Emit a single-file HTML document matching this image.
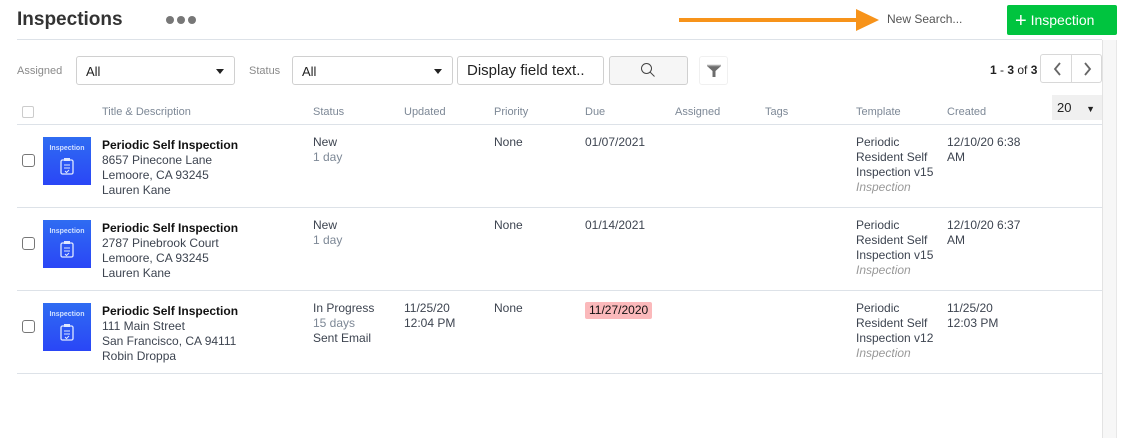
<!DOCTYPE html>
<html><head><meta charset="utf-8"><style>
*{box-sizing:border-box;margin:0;padding:0}
body{width:1137px;height:438px;background:#fff;font-family:"Liberation Sans",Arial,sans-serif;position:relative;overflow:hidden;color:#333}
.a{position:absolute;white-space:nowrap}
.sel{position:absolute;border:1px solid #d0d0d0;border-radius:3px;background:#fff;font-size:13px;color:#222;padding:7px 0 0 9px}
.sel .car{position:absolute;right:10px;top:12px;width:0;height:0;border-left:4px solid transparent;border-right:4px solid transparent;border-top:5px solid #222}
.lbl{font-size:11px;color:#8a8a8a}
.th{font-size:11px;color:#7d8896;top:106px}
.row{position:absolute;left:17px;width:1085px;height:83px;border-bottom:1px solid #dde2e8}
.c{position:absolute;font-size:12px;line-height:15px;color:#3d4450}
.g{color:#7d8896}
.cb{position:absolute;left:5px;width:13px;height:13px;border:1px solid #777;border-radius:3px;background:#fff}
.ic{position:absolute;left:26px;top:12px;width:48px;height:48px;background:linear-gradient(#2f6cf2,#2a46f6);color:#cfe0ff;font-size:7px;font-weight:bold;text-align:center;padding-top:8px}
</style></head><body>
<div class="a" style="left:17px;top:9px;font-size:19px;font-weight:bold;color:#333">Inspections</div>
<div class="a" style="left:166px;top:16px;width:8px;height:8px;border-radius:50%;background:#777"></div>
<div class="a" style="left:177px;top:16px;width:8px;height:8px;border-radius:50%;background:#777"></div>
<div class="a" style="left:188px;top:16px;width:8px;height:8px;border-radius:50%;background:#777"></div>
<div class="a" style="left:679px;top:18px;width:180px;height:4px;background:#f7931a"></div>
<div class="a" style="left:856px;top:9px;width:0;height:0;border-top:11px solid transparent;border-bottom:11px solid transparent;border-left:23px solid #f7931a"></div>
<div class="a" style="left:887px;top:12px;font-size:12px;color:#555">New Search...</div>
<div class="a" style="left:1007px;top:5px;width:110px;height:30px;background:#00c43f;border-radius:2px;color:#fff;font-size:14px;padding:7px 0 0 8px"><span style="font-size:20px;line-height:12px;position:relative;top:2px">+</span> Inspection</div>
<div class="a" style="left:17px;top:39px;width:1085px;height:1px;background:#dde2e8"></div>
<div class="a" style="left:1102px;top:40px;width:15px;height:398px;background:#f7f7f7;border-left:1px solid #e3e3e3;border-right:1px solid #e8e8e8"></div>
<div class="a lbl" style="left:17px;top:65px">Assigned</div>
<div class="sel" style="left:76px;top:56px;width:159px;height:29px">All<div class="car"></div></div>
<div class="a lbl" style="left:249px;top:65px">Status</div>
<div class="sel" style="left:292px;top:56px;width:161px;height:29px">All<div class="car"></div></div>
<div class="sel" style="left:457px;top:56px;width:147px;height:29px;font-size:15px;padding:5px 0 0 9px">Display field text..</div>
<div class="a" style="left:609px;top:56px;width:79px;height:29px;border:1px solid #d0d0d0;border-radius:3px;background:#f6f6f6"></div>
<svg class="a" style="left:640px;top:62px" width="16" height="16" viewBox="0 0 16 16"><circle cx="6.5" cy="6.5" r="5" fill="none" stroke="#444" stroke-width="1"/><line x1="10" y1="10" x2="14.5" y2="14.5" stroke="#444" stroke-width="1"/></svg>
<div class="a" style="left:699px;top:56px;width:29px;height:29px;border:1px solid #f0f0f0;border-radius:3px"></div>
<svg class="a" style="left:706px;top:64px" width="16" height="14" viewBox="0 0 16 14"><path d="M1 2h14l-5.5 5v6h-3V7z" fill="#6d6d6d"/><path d="M1 1.5h14" stroke="#aaa" stroke-width="1.5"/></svg>
<div class="a" style="left:990px;top:63px;font-size:12px;color:#222"><b>1</b> - <b>3</b> of <b>3</b></div>
<div class="a" style="left:1040px;top:54px;width:62px;height:29px;border:1px solid #d8d8d8;border-radius:3px;background:#fff"></div>
<div class="a" style="left:1071px;top:54px;width:1px;height:29px;background:#d8d8d8"></div>
<svg class="a" style="left:1050px;top:59px" width="14" height="20"><path d="M10 4L5 10l5 6" fill="none" stroke="#666" stroke-width="1.8"/></svg>
<svg class="a" style="left:1080px;top:59px" width="14" height="20"><path d="M5 4l5 6-5 6" fill="none" stroke="#666" stroke-width="1.8"/></svg>
<div class="a" style="left:1052px;top:95px;width:50px;height:25px;background:#f0f0f0;font-size:13px;color:#222;padding:5px 0 0 5px">20 <span style="font-size:9px;margin-left:11px">▼</span></div>
<div class="a" style="left:22px;top:106px;width:12px;height:12px;border:1px solid #ccc;border-radius:2px"></div>
<div class="a th" style="left:102px">Title &amp; Description</div>
<div class="a th" style="left:313px">Status</div>
<div class="a th" style="left:404px">Updated</div>
<div class="a th" style="left:494px">Priority</div>
<div class="a th" style="left:585px">Due</div>
<div class="a th" style="left:675px">Assigned</div>
<div class="a th" style="left:765px">Tags</div>
<div class="a th" style="left:856px">Template</div>
<div class="a th" style="left:947px">Created</div>
<div class="a" style="left:17px;top:124px;width:1085px;height:1px;background:#dde2e8"></div>

<div class="row" style="top:125px">
<div class="cb" style="top:29px"></div><div class="ic">Inspection<svg style="display:block;margin:5px auto 0" width="14" height="18" viewBox="0 0 14 18"><rect x="1" y="3" width="12" height="14" rx="1.5" fill="none" stroke="#dfe8ff" stroke-width="1.3"/><rect x="4" y="1" width="6" height="3" fill="#dfe8ff"/><path d="M4 8h6M4 11h6M5 14l1.5 1.5L9 13" stroke="#dfe8ff" stroke-width="1" fill="none"/></svg></div>
<div class="c" style="left:85px;top:13px"><b style="color:#111">Periodic Self Inspection</b><br>8657 Pinecone Lane<br>Lemoore, CA 93245<br>Lauren Kane</div>
<div class="c" style="left:296px;top:10px">New<br><span class="g">1 day</span></div>
<div class="c" style="left:477px;top:10px">None</div>
<div class="c" style="left:568px;top:10px">01/07/2021</div>
<div class="c" style="left:839px;top:10px">Periodic<br>Resident Self<br>Inspection v15<br><i style="color:#999">Inspection</i></div>
<div class="c" style="left:930px;top:10px">12/10/20 6:38<br>AM</div>
</div>
<div class="row" style="top:208px">
<div class="cb" style="top:29px"></div><div class="ic">Inspection<svg style="display:block;margin:5px auto 0" width="14" height="18" viewBox="0 0 14 18"><rect x="1" y="3" width="12" height="14" rx="1.5" fill="none" stroke="#dfe8ff" stroke-width="1.3"/><rect x="4" y="1" width="6" height="3" fill="#dfe8ff"/><path d="M4 8h6M4 11h6M5 14l1.5 1.5L9 13" stroke="#dfe8ff" stroke-width="1" fill="none"/></svg></div>
<div class="c" style="left:85px;top:13px"><b style="color:#111">Periodic Self Inspection</b><br>2787 Pinebrook Court<br>Lemoore, CA 93245<br>Lauren Kane</div>
<div class="c" style="left:296px;top:10px">New<br><span class="g">1 day</span></div>
<div class="c" style="left:477px;top:10px">None</div>
<div class="c" style="left:568px;top:10px">01/14/2021</div>
<div class="c" style="left:839px;top:10px">Periodic<br>Resident Self<br>Inspection v15<br><i style="color:#999">Inspection</i></div>
<div class="c" style="left:930px;top:10px">12/10/20 6:37<br>AM</div>
</div>
<div class="row" style="top:291px">
<div class="cb" style="top:29px"></div><div class="ic">Inspection<svg style="display:block;margin:5px auto 0" width="14" height="18" viewBox="0 0 14 18"><rect x="1" y="3" width="12" height="14" rx="1.5" fill="none" stroke="#dfe8ff" stroke-width="1.3"/><rect x="4" y="1" width="6" height="3" fill="#dfe8ff"/><path d="M4 8h6M4 11h6M5 14l1.5 1.5L9 13" stroke="#dfe8ff" stroke-width="1" fill="none"/></svg></div>
<div class="c" style="left:85px;top:13px"><b style="color:#111">Periodic Self Inspection</b><br>111 Main Street<br>San Francisco, CA 94111<br>Robin Droppa</div>
<div class="c" style="left:296px;top:10px">In Progress<br><span class="g">15 days</span><br>Sent Email</div>
<div class="c" style="left:387px;top:10px">11/25/20<br>12:04 PM</div>
<div class="c" style="left:477px;top:10px">None</div>
<div class="c" style="left:568px;top:11px;background:#fbb9bb;color:#111;padding:1px 4px;border-radius:2px">11/27/2020</div>
<div class="c" style="left:839px;top:10px">Periodic<br>Resident Self<br>Inspection v12<br><i style="color:#999">Inspection</i></div>
<div class="c" style="left:930px;top:10px">11/25/20<br>12:03 PM</div>
</div>
</body></html>
